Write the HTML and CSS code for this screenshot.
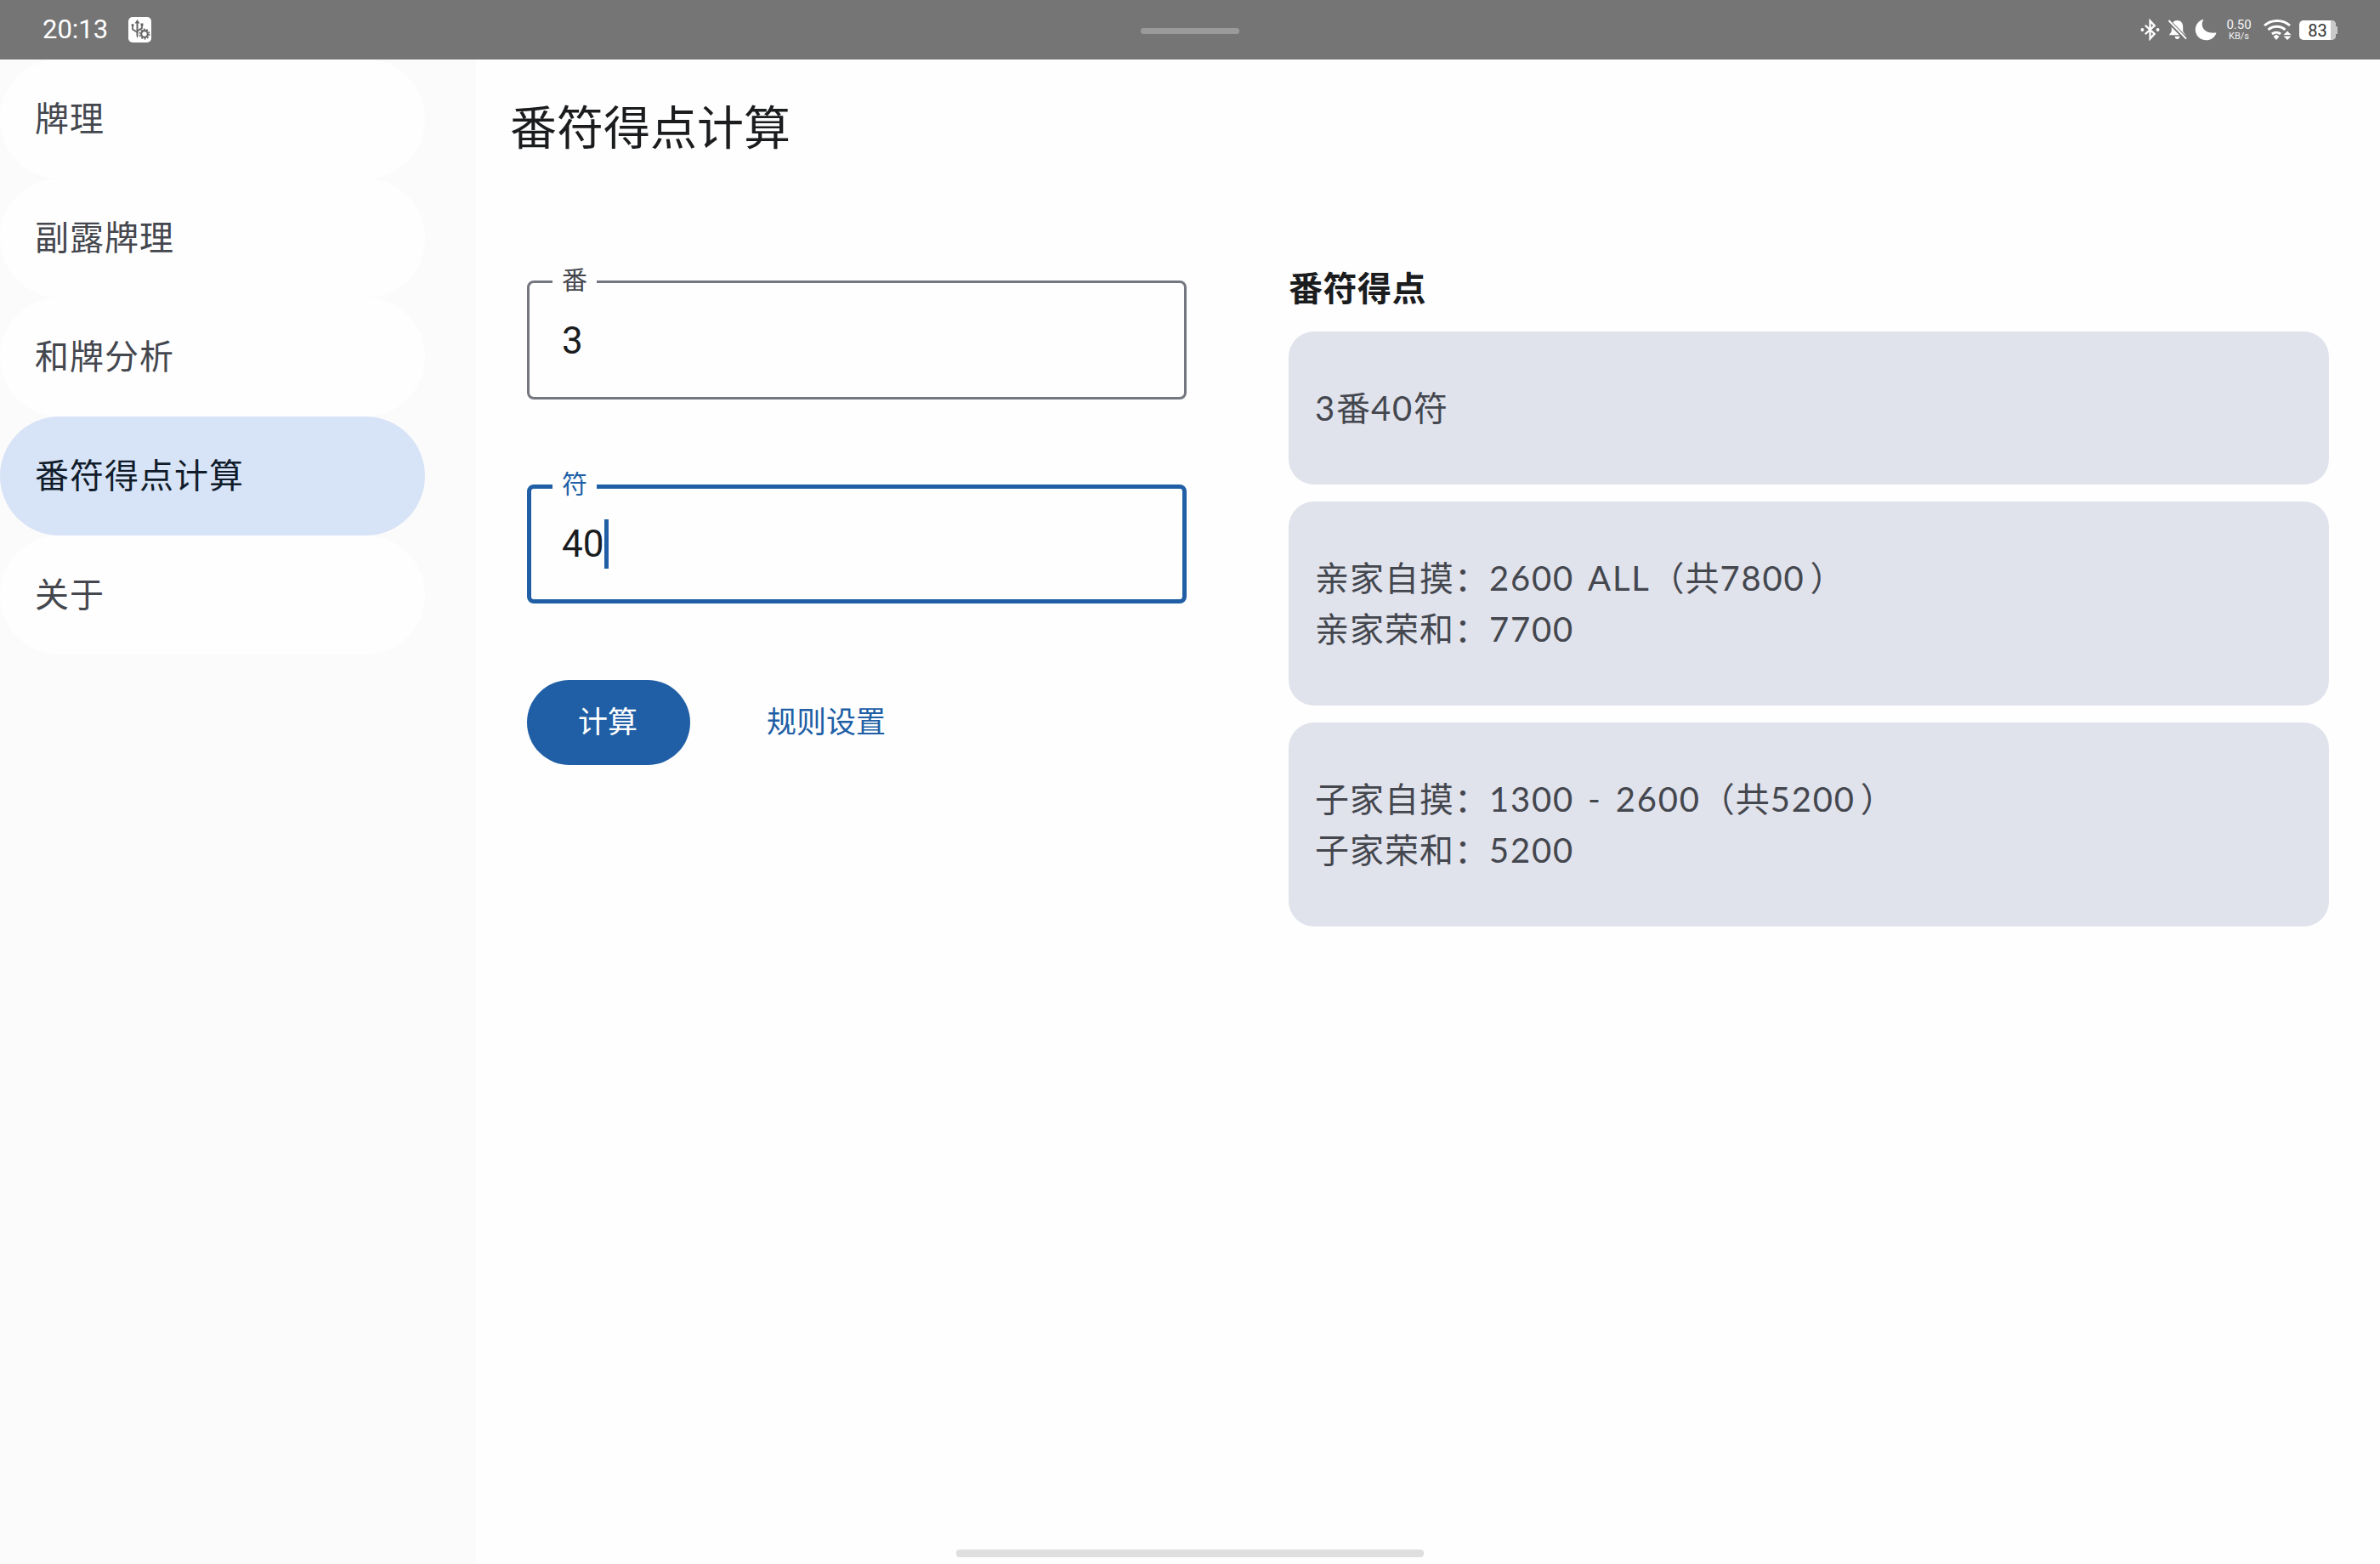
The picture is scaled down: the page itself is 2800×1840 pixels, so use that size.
FILE: index.html
```html
<!DOCTYPE html>
<html lang="zh-CN">
<head>
<meta charset="utf-8">
<title>番符得点计算</title>
<link rel="stylesheet" href="styles.css">
</head>
<body>
<div class="app">
  <header class="status">
    <div class="status-left">
      <span class="time">20:13</span>
      <span class="usb-badge">
        <svg width="24" height="28" viewBox="0 0 24 28"><path d="M8.500 2 L11.500 6.500 H9.500 V21 L8.500 24 L7.500 21 V6.500 H5.500 Z" fill="#666"/><path d="M3 9 V13.500 L8.500 17 M14 9 V12 L8.500 15.500" fill="none" stroke="#666" stroke-width="1.800"/><circle cx="3" cy="8.500" r="1.600" fill="#666"/><rect x="12.500" y="6.500" width="3" height="3" fill="#666"/><circle cx="17" cy="19" r="3.800" fill="none" stroke="#666" stroke-width="2.200"/><circle cx="17" cy="19" r="5.600" fill="none" stroke="#666" stroke-width="1.600" stroke-dasharray="2 1.500"/></svg>
      </span>
    </div>
    <span class="grip"></span>
    <div class="status-right">
      <svg class="ic" width="23" height="26" viewBox="0 0 24 26"><path d="M6 7.500 L17.500 18 L12 24 V2 L17.500 8 L6 18.500" fill="none" stroke="#fff" stroke-width="2.400"/><circle cx="2.500" cy="13" r="2" fill="#fff"/><circle cx="21.500" cy="13" r="2" fill="#fff"/></svg>
      <svg class="ic" width="23" height="26" viewBox="0 0 24 26"><path d="M12 1.500 C16.500 1.500 19 5 19 9.500 V15 L22 19.500 H2 L5 15 V9.500 C5 5 7.500 1.500 12 1.500 Z M9 21 H15 C15 23 13.700 24.500 12 24.500 C10.300 24.500 9 23 9 21 Z" fill="#fff"/><path d="M1 2 L23 24.500" stroke="#757575" stroke-width="5"/><path d="M1.500 1.500 L23 24" stroke="#fff" stroke-width="2"/></svg>
      <svg class="ic" width="26" height="26" viewBox="0 0 26 26"><path d="M10.500 0.800 C6.500 7 8.500 18 25.500 16.500 C23.800 22 19 25.300 13.500 25.300 C6.500 25.300 0.800 19.800 0.800 13 C0.800 7 5 2 10.500 0.800 Z" fill="#fff"/></svg>
      <span class="speed"><span class="speed-num">0.50</span><span class="speed-unit">KB/s</span></span>
      <svg class="ic wifi" width="33" height="26" viewBox="0 0 33 26"><path d="M1 8 C9 0.500 23 0.500 31 8 M5.500 13 C11 8 20 8 25.500 13 M10 18 C13 15.500 17 15.500 20 18" fill="none" stroke="#fff" stroke-width="3"/><path d="M11.500 21 L15 18.500 L18.500 21 L15 25 Z" fill="#fff"/><path d="M28 14.500 L32.500 19 H23.500 Z M23.500 20.500 H32.500 L28 25 Z" fill="#fff"/></svg>
      <span class="battery"><span class="battery-level">83</span><span class="battery-rest"></span><span class="battery-cap"></span></span>
    </div>
  </header>
  <div class="content">
    <nav class="sidebar">
      <a class="nav-item">牌理</a>
      <a class="nav-item">副露牌理</a>
      <a class="nav-item">和牌分析</a>
      <a class="nav-item active">番符得点计算</a>
      <a class="nav-item">关于</a>
    </nav>
    <main class="main">
      <h1 class="title">番符得点计算</h1>
      <div class="columns">
        <section class="form">
          <div class="field">
            <label class="field-label">番</label>
            <div class="field-value">3</div>
          </div>
          <div class="field focused">
            <label class="field-label">符</label>
            <div class="field-value">40<span class="caret"></span></div>
          </div>
          <div class="actions">
            <button class="btn-primary">计算</button>
            <button class="btn-text">规则设置</button>
          </div>
        </section>
        <section class="results">
          <h2 class="results-title">番符得点</h2>
          <div class="card"><span class="num">3</span>番<span class="num">40</span>符</div>
          <div class="card">亲家自摸：<span class="num">2600 ALL</span>（共<span class="num">7800</span><span class="close">）</span><br>亲家荣和：<span class="num">7700</span></div>
          <div class="card">子家自摸：<span class="num">1300 - 2600</span>（共<span class="num">5200</span><span class="close">）</span><br>子家荣和：<span class="num">5200</span></div>
        </section>
      </div>
    </main>
  </div>
  <span class="home-bar"></span>
</div>
</body>
</html>
```
FILE: styles.css
```css
* { box-sizing: border-box; }
html, body { margin: 0; padding: 0; }
body {
  width: 2800px;
  height: 1840px;
  overflow: hidden;
  background: #fefefe;
  font-family: Roboto, "Noto Sans CJK SC", sans-serif;
  color: #44474e;
}
.app { position: relative; display: flex; flex-direction: column; width: 2800px; height: 1840px; }

.status {
  position: relative;
  flex: 0 0 70px;
  display: flex;
  align-items: center;
  justify-content: space-between;
  padding: 0 50px;
  background: #757575;
  color: #fff;
}
.status-left { display: flex; align-items: center; gap: 24px; }
.time { font-size: 31px; line-height: 40px; }
.usb-badge {
  display: flex;
  align-items: center;
  justify-content: center;
  width: 27px;
  height: 30px;
  border-radius: 5px;
  background: #fff;
}
.grip {
  position: absolute;
  left: 1342px;
  top: 33px;
  width: 116px;
  height: 7px;
  border-radius: 3px;
  background: #9a9a9a;
}
.status-right { display: flex; align-items: center; gap: 9px; }
.ic { display: block; }
.speed { display: flex; flex-direction: column; align-items: center; width: 34px; color: #f4f4f4; }
.speed-num { font-size: 15px; line-height: 15px; }
.speed-unit { font-size: 11px; line-height: 12px; }
.wifi { margin-left: 3px; }
.battery {
  position: relative;
  display: flex;
  width: 43px;
  height: 23px;
  margin-right: 2px;
  margin-top: 1px;
  border-radius: 5px;
  background: #fff;
}
.battery-level {
  flex: 1;
  padding-left: 6px;
  text-align: center;
  font-size: 20px;
  line-height: 24px;
  color: #333;
}
.battery-rest { width: 6px; border-radius: 0 5px 5px 0; background: #c9c9c9; }
.battery-cap {
  position: absolute;
  right: -2px;
  top: 7px;
  width: 2px;
  height: 9px;
  background: #c9c9c9;
}

.content { flex: 1; display: flex; min-height: 0; }
.sidebar {
  flex: 0 0 560px;
  padding-right: 60px;
  background: #fbfbfb;
}
.nav-item {
  display: flex;
  align-items: center;
  height: 140px;
  padding: 0 0 6px 41px;
  border-radius: 70px;
  background: #fefefe;
  font-size: 40px;
  letter-spacing: 1px;
  color: #44474e;
}
.nav-item.active { background: #d7e3f6; color: #111c2b; }

.main { flex: 1; padding: 0 60px 0 40px; background: #fefefe; }
.title {
  margin: 47px 0 0;
  font-size: 55px;
  line-height: 68px;
  font-weight: 400;
  color: #1a1c1e;
}
.columns {
  display: grid;
  grid-template-columns: 776px 1224px;
  column-gap: 120px;
  margin-top: 89px;
  padding-left: 20px;
}
.form { display: flex; flex-direction: column; gap: 100px; padding-top: 56px; }
.field {
  position: relative;
  height: 140px;
  padding: 2px 38px 0;
  border: 3px solid #74777f;
  border-radius: 8px;
  display: flex;
  align-items: center;
}
.field.focused { border: 5px solid #205fa6; padding: 0 36px; }
.field-label {
  position: absolute;
  left: 27px;
  top: -18px;
  padding: 0 11px;
  background: #fefefe;
  font-size: 30px;
  line-height: 30px;
  color: #44474e;
}
.field.focused .field-label { left: 25px; top: -20px; color: #205fa6; }
.field-value { display: flex; align-items: center; font-size: 44px; color: #1a1c1e; }
.caret { width: 5px; height: 58px; margin-left: 1px; background: #205fa6; }
.actions { display: flex; align-items: center; gap: 50px; margin-top: -10px; }
.btn-primary {
  width: 192px;
  height: 100px;
  padding: 0 2px 7px 0;
  border: 0;
  border-radius: 50px;
  background: #205fa6;
  color: #fff;
  font: inherit;
  font-size: 35px;
}
.btn-text {
  padding: 0 40px 7px;
  height: 100px;
  border: 0;
  background: transparent;
  color: #205fa6;
  font: inherit;
  font-size: 35px;
}
.results { display: flex; flex-direction: column; gap: 20px; padding-top: 42px; }
.results-title {
  margin: 0 0 4px;
  font-size: 40px;
  line-height: 50px;
  letter-spacing: 0.5px;
  font-weight: 700;
  color: #1a1c1e;
}
.card {
  padding: 60px 31px;
  min-height: 180px;
  border-radius: 30px;
  background: #e0e2ec;
  font-family: Lato, "Noto Sans CJK SC", sans-serif;
  font-size: 40px;
  line-height: 60px;
  letter-spacing: 1px;
  color: #44474e;
}
.num { letter-spacing: 1.8px; word-spacing: 4px; }
.close { padding-left: 6px; }
.home-bar {
  position: absolute;
  left: 1125px;
  bottom: 8px;
  width: 550px;
  height: 9px;
  border-radius: 4px;
  background: #dfdfe0;
}
```
